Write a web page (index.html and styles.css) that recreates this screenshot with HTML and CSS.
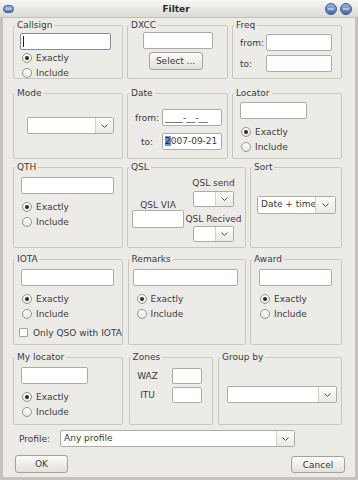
FILE: index.html
```html
<!DOCTYPE html>
<html lang="en">
<head>
  <meta charset="UTF-8">
  <title>Filter</title>
  <link rel="stylesheet" href="styles.css">
</head>
<body>
  <div class="window">
    <div class="titlebar">
      <svg class="menu-icon" width="11" height="8" viewBox="0 0 11 8">
        <defs>
          <linearGradient id="pill" x1="0" y1="0" x2="0" y2="1">
            <stop offset="0" stop-color="#a9c0e6"/>
            <stop offset="1" stop-color="#4a70b0"/>
          </linearGradient>
        </defs>
        <rect x="0.5" y="0.5" width="10" height="7" rx="3.5" fill="url(#pill)" stroke="#3f5f96"/>
        <line x1="2.5" y1="4" x2="8.5" y2="4" stroke="#dfe8f6" stroke-width="1"/>
      </svg>
      <span class="title">Filter</span>
      <div class="title-buttons">
        <svg width="12" height="12" viewBox="0 0 12 12">
          <defs>
            <linearGradient id="ball" x1="0" y1="0" x2="0" y2="1">
              <stop offset="0" stop-color="#9fb8e2"/>
              <stop offset="1" stop-color="#3f64a6"/>
            </linearGradient>
          </defs>
          <circle cx="6" cy="6" r="5.5" fill="url(#ball)" stroke="#3d5d94"/>
          <line x1="3" y1="6" x2="9" y2="6" stroke="#dbe5f5" stroke-width="1.2"/>
        </svg>
        <svg width="12" height="12" viewBox="0 0 12 12">
          <circle cx="6" cy="6" r="5.5" fill="url(#ball)" stroke="#3d5d94"/>
          <line x1="3" y1="6" x2="9" y2="6" stroke="#dbe5f5" stroke-width="1.2"/>
        </svg>
      </div>
    </div>

    <div class="frame">
      <div class="row row-1">
        <fieldset class="group callsign">
          <legend>Callsign</legend>
          <div class="inner">
            <div class="entry focus"><span class="caret"></span></div>
            <label class="radio"><span class="mark on"></span>Exactly</label>
            <label class="radio"><span class="mark"></span>Include</label>
          </div>
        </fieldset>
        <fieldset class="group dxcc">
          <legend>DXCC</legend>
          <div class="inner">
            <input class="entry" type="text">
            <button class="btn select-btn">Select ...</button>
          </div>
        </fieldset>
        <fieldset class="group freq">
          <legend>Freq</legend>
          <div class="inner pair-grid">
            <span>from:</span><input class="entry" type="text">
            <span>to:</span><input class="entry" type="text">
          </div>
        </fieldset>
      </div>

      <div class="row row-2">
        <fieldset class="group mode">
          <legend>Mode</legend>
          <div class="inner">
            <div class="combo mode-combo">
              <span class="combo-text"></span>
              <span class="combo-arrow"><svg width="7" height="4" viewBox="0 0 7 4"><polyline points="0.5,0.5 3.5,3.5 6.5,0.5"/></svg></span>
            </div>
          </div>
        </fieldset>
        <fieldset class="group date">
          <legend>Date</legend>
          <div class="inner date-grid">
            <span>from:</span><input class="entry" type="text" value="____-__-__">
            <span>to:</span><div class="entry"><span class="sel">2</span>007-09-21</div>
          </div>
        </fieldset>
        <fieldset class="group locator">
          <legend>Locator</legend>
          <div class="inner">
            <input class="entry" type="text">
            <label class="radio first"><span class="mark on"></span>Exactly</label>
            <label class="radio"><span class="mark"></span>Include</label>
          </div>
        </fieldset>
      </div>

      <div class="row row-3">
        <fieldset class="group qth">
          <legend>QTH</legend>
          <div class="inner">
            <input class="entry" type="text">
            <label class="radio first"><span class="mark on"></span>Exactly</label>
            <label class="radio"><span class="mark"></span>Include</label>
          </div>
        </fieldset>
        <fieldset class="group qsl">
          <legend>QSL</legend>
          <div class="inner qsl-cols">
            <div class="qsl-via">
              <span class="cap">QSL VIA</span>
              <input class="entry" type="text">
            </div>
            <div class="qsl-flags">
              <span class="cap">QSL send</span>
              <div class="combo small-combo">
                <span class="combo-text"></span>
                <span class="combo-arrow"><svg width="7" height="4" viewBox="0 0 7 4"><polyline points="0.5,0.5 3.5,3.5 6.5,0.5"/></svg></span>
              </div>
              <span class="cap recv">QSL Recived</span>
              <div class="combo small-combo">
                <span class="combo-text"></span>
                <span class="combo-arrow"><svg width="7" height="4" viewBox="0 0 7 4"><polyline points="0.5,0.5 3.5,3.5 6.5,0.5"/></svg></span>
              </div>
            </div>
          </div>
        </fieldset>
        <fieldset class="group sort">
          <legend>Sort</legend>
          <div class="inner">
            <div class="combo sort-combo">
              <span class="combo-text">Date + time</span>
              <span class="combo-arrow"><svg width="7" height="4" viewBox="0 0 7 4"><polyline points="0.5,0.5 3.5,3.5 6.5,0.5"/></svg></span>
            </div>
          </div>
        </fieldset>
      </div>

      <div class="row row-4">
        <fieldset class="group iota">
          <legend>IOTA</legend>
          <div class="inner">
            <input class="entry" type="text">
            <label class="radio first"><span class="mark on"></span>Exactly</label>
            <label class="radio"><span class="mark"></span>Include</label>
            <label class="check"><span class="box"></span>Only QSO with IOTA</label>
          </div>
        </fieldset>
        <fieldset class="group remarks">
          <legend>Remarks</legend>
          <div class="inner">
            <input class="entry" type="text">
            <label class="radio first"><span class="mark on"></span>Exactly</label>
            <label class="radio"><span class="mark"></span>Include</label>
          </div>
        </fieldset>
        <fieldset class="group award">
          <legend>Award</legend>
          <div class="inner">
            <input class="entry" type="text">
            <label class="radio first"><span class="mark on"></span>Exactly</label>
            <label class="radio"><span class="mark"></span>Include</label>
          </div>
        </fieldset>
      </div>

      <div class="row row-5">
        <fieldset class="group mylocator">
          <legend>My locator</legend>
          <div class="inner">
            <input class="entry" type="text">
            <label class="radio first"><span class="mark on"></span>Exactly</label>
            <label class="radio"><span class="mark"></span>Include</label>
          </div>
        </fieldset>
        <fieldset class="group zones">
          <legend>Zones</legend>
          <div class="inner zones-grid">
            <span>WAZ</span><input class="entry" type="text">
            <span>ITU</span><input class="entry" type="text">
          </div>
        </fieldset>
        <fieldset class="group groupby">
          <legend>Group by</legend>
          <div class="inner">
            <div class="combo groupby-combo">
              <span class="combo-text"></span>
              <span class="combo-arrow"><svg width="7" height="4" viewBox="0 0 7 4"><polyline points="0.5,0.5 3.5,3.5 6.5,0.5"/></svg></span>
            </div>
          </div>
        </fieldset>
      </div>

      <div class="profile-row">
        <span class="profile-label">Profile:</span>
        <div class="combo profile-combo">
          <span class="combo-text">Any profile</span>
          <span class="combo-arrow"><svg width="7" height="4" viewBox="0 0 7 4"><polyline points="0.5,0.5 3.5,3.5 6.5,0.5"/></svg></span>
        </div>
      </div>

      <div class="button-row">
        <button class="btn ok-btn">OK</button>
        <button class="btn cancel-btn">Cancel</button>
      </div>
    </div>
  </div>
</body>
</html>
```

FILE: styles.css
```css
body {
  margin: 0;
  background: #8e8c87;
  font-family: "DejaVu Sans", "Liberation Sans", sans-serif;
  font-size: 9px;
  color: #3a3a3a;
}

.window {
  width: 358px;
  height: 480px;
  background: #edebe7;
}

/* title bar */
.titlebar {
  height: 18px;
  box-sizing: border-box;
  display: grid;
  grid-template-columns: 1fr auto 1fr;
  align-items: center;
  background: linear-gradient(#f8f7f5, #dcdad4);
  border-bottom: 1px solid #c4c1ba;
}

.menu-icon {
  margin-left: 3px;
  display: block;
}

.title {
  font-weight: bold;
  color: #2a2a2a;
  margin-left: -6px;
}

.title-buttons {
  justify-self: end;
  display: flex;
  gap: 3px;
  margin-right: 6px;
}

.title-buttons svg {
  display: block;
}

/* dialog body */
.frame {
  height: 462px;
  box-sizing: border-box;
  border: 3px solid #c6c3bc;
  border-top: 0;
  padding: 2px 13px 0 10px;
}

.row {
  display: flex;
  justify-content: space-between;
}

.row-1 { height: 59px; }
.row-2 { height: 71px; margin-top: 9px; }
.row-3 { height: 86px; margin-top: 3px; }
.row-4 { height: 91px; margin-top: 6px; }
.row-5 { height: 73px; margin-top: 7px; }

.group {
  margin: 0;
  padding: 0;
  min-width: 0;
  box-sizing: border-box;
  border: 1px solid #cac7c0;
  border-radius: 2px;
}

.group legend {
  padding: 0 2px;
  margin-left: 1px;
  line-height: 11px;
}

.inner {
  padding: 0 7px;
  white-space: nowrap;
}

/* widths of the boxes */
.callsign, .mode, .qth, .iota, .mylocator { width: 110px; }
.dxcc, .date { width: 101px; }
.freq, .locator { width: 110px; }
.qsl { width: 119px; }
.sort, .award { width: 92px; }
.remarks { width: 118px; }
.zones { width: 84px; }
.groupby { width: 124px; }

/* text fields */
.entry {
  display: block;
  box-sizing: border-box;
  height: 17px;
  margin: 0;
  padding: 0 2px;
  border: 1px solid #aeaba4;
  border-radius: 2px;
  background: #fff;
  font: inherit;
  line-height: 15px;
  color: #3a3a3a;
  outline: none;
}

.entry.focus {
  border-color: #7f8ea6;
}

.caret {
  display: inline-block;
  width: 1px;
  height: 11px;
  margin-top: 2px;
  background: #222;
  vertical-align: top;
}

.sel {
  background: #6f93cf;
  color: #1a1a1a;
}

/* radios and check box */
.radio, .check {
  display: flex;
  align-items: center;
  gap: 4px;
  height: 15px;
  margin-left: 1px;
}

.radio.first {
  margin-top: 5px;
}

.mark {
  flex-shrink: 0;
  width: 10px;
  height: 10px;
  box-sizing: border-box;
  border: 1px solid #97948e;
  border-radius: 50%;
  background: linear-gradient(#fff, #e9e7e3);
  display: flex;
  align-items: center;
  justify-content: center;
}

.mark.on::after {
  content: "";
  width: 4px;
  height: 4px;
  border-radius: 50%;
  background: #2b2b2b;
}

.check {
  margin: 4px 0 0 -2px;
  gap: 5px;
}

.box {
  flex-shrink: 0;
  width: 9px;
  height: 9px;
  box-sizing: border-box;
  border: 1px solid #a3a09a;
  border-radius: 1px;
  background: #fff;
}

/* buttons */
.btn {
  box-sizing: border-box;
  height: 18px;
  padding: 0;
  border: 1px solid #a4a19a;
  border-radius: 3px;
  background: linear-gradient(#fbfbfa, #e3e1dc);
  font: inherit;
  color: #3a3a3a;
}

/* combo boxes */
.combo {
  display: flex;
  box-sizing: border-box;
  height: 17px;
  border: 1px solid #aeaba4;
  border-radius: 2px;
  background: #fff;
}

.combo-text {
  flex: 1;
  min-width: 0;
  padding-left: 3px;
  line-height: 15px;
  overflow: hidden;
  white-space: nowrap;
}

.combo-arrow {
  width: 17px;
  border-left: 1px solid #d3d0c9;
  background: linear-gradient(#fcfcfb, #ebe9e5);
  display: flex;
  align-items: center;
  justify-content: center;
}

.combo-arrow svg {
  display: block;
  fill: none;
  stroke: #4a4a4a;
  stroke-width: 1;
}

/* row 1 */
.callsign .entry {
  width: 91px;
  margin: 2px 0 0 -1px;
}

.dxcc .inner {
  padding: 0;
  display: flex;
  flex-direction: column;
  align-items: center;
}

.dxcc .entry {
  width: 70px;
  margin-top: 1px;
}

.select-btn {
  width: 54px;
  margin: 3px 4px 0 0;
}

.pair-grid {
  display: grid;
  grid-template-columns: 26px 66px;
  row-gap: 4px;
  align-items: center;
  margin-top: 3px;
}

/* row 2 */
.mode .inner {
  padding-left: 13px;
}

.mode-combo {
  width: 87px;
  margin-top: 18px;
}

.date-grid {
  display: grid;
  grid-template-columns: 24px 60px;
  column-gap: 3px;
  row-gap: 7px;
  align-items: center;
  margin-top: 10px;
}

.date-grid > span,
.zones-grid > span {
  text-align: center;
}

.locator .entry {
  width: 67px;
  margin-top: 3px;
}

/* row 3 */
.qth .entry,
.iota .entry {
  width: 93px;
  margin-top: 4px;
}

.qsl-cols {
  display: flex;
  gap: 2px;
  padding: 0 3px 0 4px;
}

.qsl-via,
.qsl-flags {
  display: flex;
  flex-direction: column;
  align-items: center;
}

.qsl-via {
  width: 52px;
  margin-top: 28px;
}

.qsl-via .cap {
  line-height: 9px;
}

.qsl-via .entry {
  width: 52px;
  height: 18px;
}

.qsl-flags {
  width: 55px;
  margin-top: 5px;
}

.cap {
  line-height: 11px;
}

.small-combo {
  width: 41px;
  height: 16px;
  margin-top: 2px;
}

.qsl-flags .recv {
  margin-top: 7px;
}

.qsl-flags .recv + .small-combo {
  margin-top: 1px;
}

.sort .inner {
  padding-left: 6px;
}

.sort-combo {
  width: 79px;
  height: 18px;
  margin-top: 23px;
}

.sort-combo .combo-arrow {
  width: 19px;
}

/* row 4 */
.remarks .inner {
  padding-left: 4px;
}

.remarks .entry {
  width: 105px;
  margin-top: 4px;
}

.remarks .radio {
  margin-left: 4px;
}

.award .inner {
  padding-left: 8px;
}

.award .entry {
  width: 73px;
  margin-top: 4px;
}

/* row 5 */
.mylocator .entry {
  width: 67px;
  margin-top: 4px;
}

.zones-grid {
  display: grid;
  grid-template-columns: 28px 30px;
  column-gap: 10px;
  row-gap: 3px;
  align-items: center;
  margin-top: 5px;
  padding-left: 4px;
}

.zones-grid .entry {
  height: 16px;
}

.groupby .inner {
  padding-left: 8px;
}

.groupby-combo {
  width: 110px;
  margin-top: 23px;
}

/* bottom */
.profile-row {
  display: flex;
  align-items: center;
  margin-top: 5px;
}

.profile-label {
  margin-left: 6px;
}

.profile-combo {
  width: 235px;
  margin-left: 10px;
}

.button-row {
  display: flex;
  justify-content: space-between;
  margin: 8px -3px 0 2px;
}

.ok-btn {
  width: 53px;
}

.cancel-btn {
  width: 54px;
  height: 17px;
  margin-top: 1px;
}
```
